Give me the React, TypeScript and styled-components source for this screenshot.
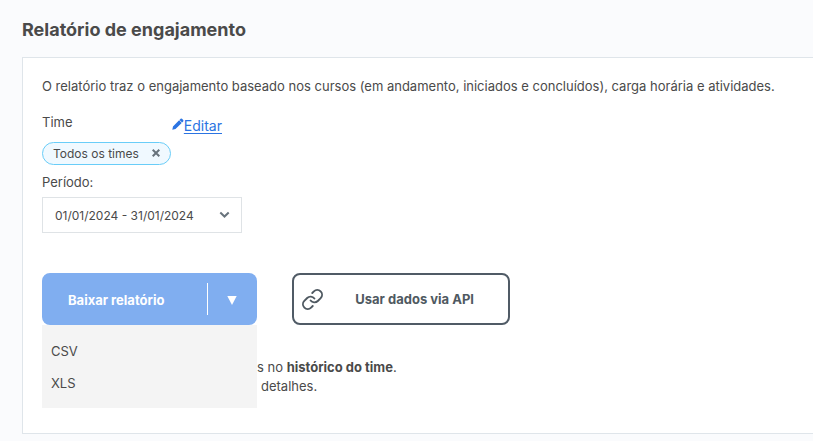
import React from "react";
import styled, { createGlobalStyle } from "styled-components";

const GlobalStyle = createGlobalStyle`
  *, *::before, *::after { box-sizing: border-box; }
  body {
    margin: 0;
    background: #fafbfd;
    color: #4a4a4a;
    font-family: Inter, "Liberation Sans", sans-serif;
    font-size: 13px;
    line-height: 20px;
  }
  button { font: inherit; color: inherit; cursor: pointer; }
`;

const Page = styled.main`
  padding: 18px 0 7px 22px;
`;

const Title = styled.h1`
  margin: 0 0 15px;
  font-size: 18px;
  line-height: 24px;
  font-weight: 700;
`;

const Card = styled.section`
  background: #fff;
  border: 1px solid #dfe5ea;
  border-right: 0;
  padding: 18px 19px 37px;
`;

const Intro = styled.p`
  margin: 0 0 16px;
`;

const TeamHeader = styled.div`
  display: flex;
  justify-content: space-between;
  width: 180px;
  margin-bottom: 6px;
`;

const EditLink = styled.a`
  display: inline-flex;
  align-items: center;
  padding-top: 4px;
  color: #2b74e2;
  font-size: 14px;
  text-decoration: none;

  span { text-decoration: underline; text-underline-offset: 2px; }
  svg { margin-bottom: 4px; }
`;

const Chip = styled.div`
  display: flex;
  align-items: center;
  justify-content: space-between;
  width: 129px;
  height: 23px;
  padding: 0 10px;
  border: 1px solid #69cdf8;
  border-radius: 12px;
  background: #f0f9ff;
  font-size: 12px;
`;

const ChipRemove = styled.button`
  display: flex;
  padding: 0 0 2px;
  border: 0;
  background: none;
`;

const PeriodLabel = styled.label`
  display: block;
  margin: 7px 0 5px;
`;

const PeriodButton = styled.button`
  display: flex;
  align-items: center;
  justify-content: space-between;
  width: 200px;
  height: 36px;
  padding: 2px 11px 0 12px;
  border: 1px solid #dfe3e6;
  background: #fff;
  font-size: 12px;
`;

const Chevron = styled.svg`
  margin-bottom: 2px;
`;

const Actions = styled.div`
  display: flex;
  gap: 35px;
  margin: 40px 0 33px;
`;

const Download = styled.div`
  position: relative;
  display: flex;
  align-items: center;
  width: 215px;
  height: 52px;
  border-radius: 8px;
  background: #80aef0;
  color: #fff;
`;

const DownloadButton = styled.button`
  flex: 1;
  height: 32px;
  padding: 2px 0 0 26px;
  border: 0;
  border-right: 1px solid #fff;
  background: none;
  color: #fff;
  font-weight: 700;
  text-align: left;
`;

const ToggleButton = styled.button`
  display: flex;
  align-items: center;
  justify-content: center;
  width: 49px;
  height: 52px;
  padding: 2px 2px 0 0;
  border: 0;
  background: none;
`;

const Menu = styled.div`
  position: absolute;
  top: 100%;
  left: 0;
  right: 0;
  padding: 10px 0 9px;
  background: #f4f4f4;
`;

const MenuItem = styled.button`
  display: block;
  width: 100%;
  height: 32px;
  padding: 0 9px;
  border: 0;
  background: none;
  color: #4a4a4a;
  text-align: left;
`;

const ApiButton = styled.button`
  display: flex;
  align-items: center;
  width: 218px;
  height: 52px;
  padding: 0 34px 0 7px;
  border: 2px solid #505b66;
  border-radius: 8px;
  background: #fff;
  color: #4f5961;
  font-weight: 700;

  span { flex: 1; text-align: right; }
`;

const Note = styled.p`
  margin: 0;
  padding-left: 215px;
  line-height: 19px;
`;

const NoteEnd = styled.span`
  padding-left: 4px;
`;

export default function App() {
  return (
    <>
      <GlobalStyle />
      <Page>
        <Title>Relatório de engajamento</Title>
        <Card>
          <Intro>
            O relatório traz o engajamento baseado nos cursos (em andamento, iniciados e concluídos), carga
            horária e atividades.
          </Intro>
          <TeamHeader>
            <span>Time</span>
            <EditLink href="#editar">
              <svg width="12" height="12" viewBox="0 0 12 12" fill="currentColor" aria-hidden="true">
                <path d="M0.3 11.7 1 8.5 7.1 2.3 9.7 4.9 3.5 11ZM7.5 1.9 8.6.8Q9.3.2 10 .8L11.2 2Q11.8 2.7 11.2 3.4L10.1 4.5Z" />
              </svg>
              <span>Editar</span>
            </EditLink>
          </TeamHeader>
          <Chip>
            Todos os times
            <ChipRemove type="button" aria-label="Remover Todos os times">
              <svg width="8" height="8" viewBox="0 0 8 8" fill="none" stroke="#68737c" strokeWidth="2" aria-hidden="true">
                <path d="M.7.7 7.3 7.3M7.3.7.7 7.3" />
              </svg>
            </ChipRemove>
          </Chip>
          <PeriodLabel htmlFor="periodo">Período:</PeriodLabel>
          <PeriodButton id="periodo" type="button">
            01/01/2024 - 31/01/2024
            <Chevron width="11" height="8" viewBox="0 0 11 8" fill="none" stroke="#68737c" strokeWidth="2" aria-hidden="true">
              <path d="M1.3 1.5 5.5 5.5 9.7 1.5" />
            </Chevron>
          </PeriodButton>
          <Actions>
            <Download>
              <DownloadButton type="button">Baixar relatório</DownloadButton>
              <ToggleButton type="button" aria-label="Escolher formato" aria-expanded="true">
                <svg width="10" height="9" viewBox="0 0 10 9" fill="#fff" aria-hidden="true">
                  <path d="M.3 0H9.7L5 9Z" />
                </svg>
              </ToggleButton>
              <Menu>
                <MenuItem type="button">CSV</MenuItem>
                <MenuItem type="button">XLS</MenuItem>
              </Menu>
            </Download>
            <ApiButton type="button">
              <svg
                width="23"
                height="23"
                viewBox="0 0 24 24"
                fill="none"
                stroke="currentColor"
                strokeWidth="2"
                strokeLinecap="round"
                strokeLinejoin="round"
                aria-hidden="true"
              >
                <path d="M10 13a5 5 0 0 0 7.54.54l3-3a5 5 0 0 0-7.07-7.07l-1.72 1.71" />
                <path d="M14 11a5 5 0 0 0-7.54-.54l-3 3a5 5 0 0 0 7.07 7.07l1.71-1.71" />
              </svg>
              <span>Usar dados via API</span>
            </ApiButton>
          </Actions>
          <Note>
            s no <b>histórico do time</b>.
            <br />
            <NoteEnd>detalhes.</NoteEnd>
          </Note>
        </Card>
      </Page>
    </>
  );
}
